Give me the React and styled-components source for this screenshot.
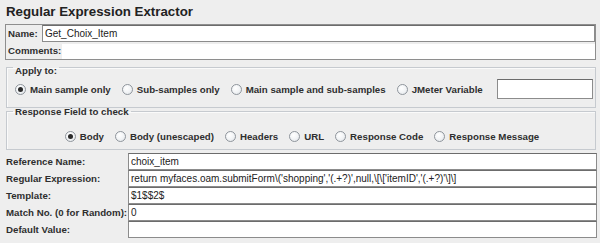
import React from 'react'
import styled, {createGlobalStyle} from 'styled-components'

const Global = createGlobalStyle`
  html, body {
    margin: 0;
    padding: 0;
    background: #eeeeee;
  }
  body {
    font-family: 'Liberation Sans', Arial, sans-serif;
    color: #2a2a2a;
  }
`

const Page = styled.div`
  width: 600px;
  height: 243px;
  overflow: hidden;
  padding: 0 4px 0 5px;
  box-sizing: border-box;
`

const Title = styled.h1`
  margin: 0;
  height: 24px;
  line-height: 24px;
  padding-left: 1px;
  font-size: 13.3px;
  font-weight: bold;
  color: #222;
`

const NamePanel = styled.div`
  border: 1px solid #8e8e8e;
  background: #eeeeee;
  display: grid;
  grid-template-columns: 36px 1fr;
  grid-template-rows: 17px 17px;
`

const Label = styled.label`
  font-size: 9.7px;
  font-weight: bold;
  color: #2e2e2e;
  display: flex;
  align-items: center;
  white-space: nowrap;
  padding-left: ${p => p.$pad || 0}px;
`

const Field = styled.div`
  box-sizing: border-box;
  height: ${p => p.$h || 17}px;
  background: #fff;
  border: 1px solid #8c8c8c;
  border-top-color: #6c6c6c;
  font-size: 10px;
  color: #222;
  padding-left: 2px;
  display: flex;
  align-items: center;
  white-space: nowrap;
  overflow: hidden;
  width: ${p => p.$w ? p.$w + 'px' : 'auto'};
`

const VarField = styled(Field)`
  margin-left: auto;
`

const CommentsArea = styled.div`
  background: #fff;
  margin: 2px 0 0 20px;
`

const Group = styled.fieldset`
  margin: ${p => p.$mt}px 0 0 1px;
  padding: 0 2px 0 4px;
  border: 1px solid #c6cacf;
  box-shadow: inset 1px 1px 0 #fafafa;
  min-width: 0;
  height: ${p => p.$h}px;
  box-sizing: border-box;
`

// padding-top drops the caption below the line, like Swing's titled border
const Legend = styled.legend`
  font-size: 9.7px;
  font-weight: bold;
  color: #2e2e2e;
  padding: ${p => p.$drop || 0}px 2px 0;
  margin-left: 2px;
  line-height: 4px;
`

const RadioRow = styled.div`
  display: flex;
  align-items: center;
  gap: 11px;
  justify-content: ${p => p.$center ? 'center' : 'flex-start'};
  padding-top: ${p => p.$top}px;
  padding-left: ${p => p.$left || 0}px;
`

const RadioLabel = styled.label`
  display: flex;
  align-items: center;
  gap: 4px;
  font-size: 9.7px;
  font-weight: bold;
  color: #2e2e2e;
  white-space: nowrap;
`

const Dot = styled.span`
  width: 11px;
  height: 11px;
  box-sizing: border-box;
  border-radius: 50%;
  border: 1px solid #8f959c;
  background: radial-gradient(circle at 40% 35%, #ffffff 0%, #f2f4f6 50%, #dde1e5 100%);
  display: flex;
  align-items: center;
  justify-content: center;
  &::after {
    content: '';
    width: 5px;
    height: 5px;
    border-radius: 50%;
    background: ${p => p.$on ? '#2a2a2a' : 'transparent'};
  }
`

const FieldsGrid = styled.div`
  display: grid;
  grid-template-columns: 122px 1fr;
  grid-auto-rows: 17px;
  margin: 3px -1px 0 1px;
`

function Radio({label, on}) {
  return (
    <RadioLabel>
      <Dot $on={on} />
      {label}
    </RadioLabel>
  )
}

const applyTo = ['Main sample only', 'Sub-samples only', 'Main sample and sub-samples', 'JMeter Variable']
const responseFields = ['Body', 'Body (unescaped)', 'Headers', 'URL', 'Response Code', 'Response Message']

const fields = [
  ['Reference Name:', 'choix_item'],
  ['Regular Expression:', "return myfaces.oam.submitForm\\('shopping','(.+?)',null,\\[\\['itemID','(.+?)'\\]\\]"],
  ['Template:', '$1$$2$'],
  ['Match No. (0 for Random):', '0'],
  ['Default Value:', ''],
]

export default function App() {
  return (
    <Page>
      <Global />
      <Title>Regular Expression Extractor</Title>
      <NamePanel>
        <Label $pad={2}>Name:</Label>
        <Field>Get_Choix_Item</Field>
        <Label $pad={2}>Comments:</Label>
        <CommentsArea />
      </NamePanel>
      <Group $mt={2} $h={46}>
        <Legend $drop={7}>Apply to:</Legend>
        <RadioRow $top={6} $left={4}>
          {applyTo.map((t, i) => <Radio key={t} label={t} on={i === 0} />)}
          <VarField $h={20} $w={96} />
        </RadioRow>
      </Group>
      <Group $mt={0} $h={42}>
        <Legend $drop={2}>Response Field to check</Legend>
        <RadioRow $center $top={17}>
          {responseFields.map((t, i) => <Radio key={t} label={t} on={i === 0} />)}
        </RadioRow>
      </Group>
      <FieldsGrid>
        {fields.map(([l, v]) => (
          <React.Fragment key={l}>
            <Label>{l}</Label>
            <Field>{v}</Field>
          </React.Fragment>
        ))}
      </FieldsGrid>
    </Page>
  )
}
